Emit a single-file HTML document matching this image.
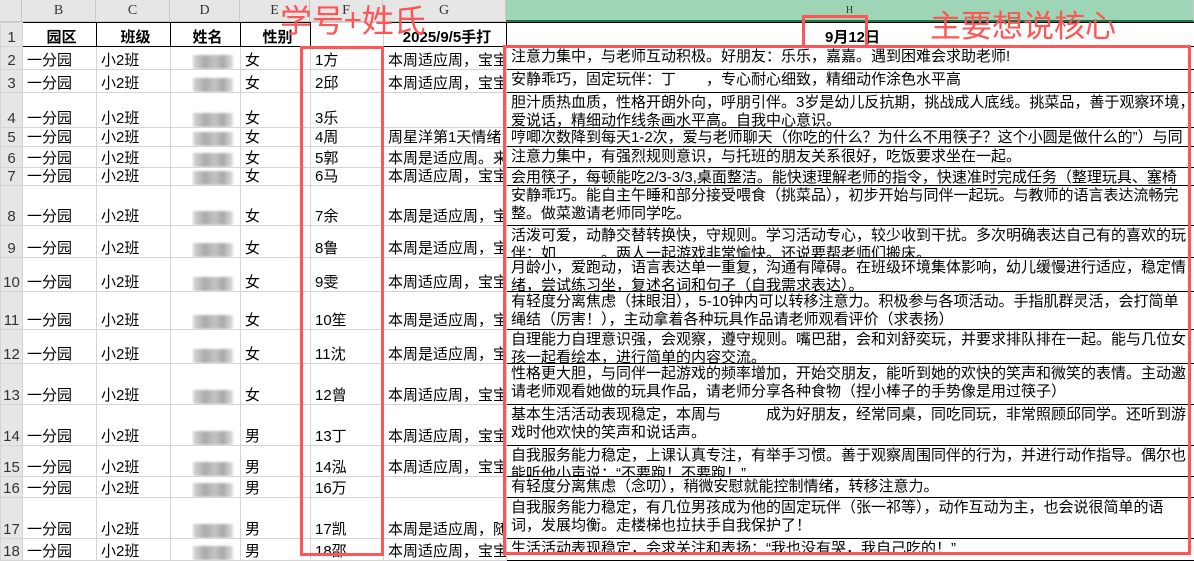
<!DOCTYPE html>
<html><head><meta charset="utf-8"><style>
*{margin:0;padding:0;box-sizing:border-box}
body{width:1194px;height:545px;overflow:hidden;background:#fff;font-family:"Liberation Sans","Noto Sans CJK SC",sans-serif;position:relative}
.hdr{position:absolute;top:0;height:22px;background:#e6e6e6;border-right:1px solid #c8c8c8;border-bottom:1px solid #c8c8c8;font-family:"Liberation Serif",serif;font-size:14px;color:#333;text-align:center;line-height:22px}
table{position:absolute;left:0;top:22px;border-collapse:collapse;table-layout:fixed;width:1194px}
td{border:1px solid #d4d4d4;white-space:nowrap;overflow:hidden;vertical-align:bottom;font-size:15px;line-height:16px;padding:0 0 0 4px;color:#000}
td.n{background:#e6e6e6;color:#333;padding:0;text-align:center;font-size:15px}
td.h{border:1px solid #000;position:relative;padding:0}
td.h div{position:absolute;left:4px;top:1px;line-height:18px}
td.b{font-weight:bold;text-align:center;border:1px solid #000}
.blur{display:inline-block;width:40px;height:14px;background:linear-gradient(90deg,#d8d8d8,#aaa 30%,#c4c4c4 55%,#a8a8a8 75%,#e0e0e0);filter:blur(1px);vertical-align:bottom;margin-left:18px}
.rb{position:absolute;border:3px solid #f55}
.ann{position:absolute;color:#f55;font-family:"Noto Sans CJK SC",sans-serif;white-space:nowrap}
</style></head><body>
<div class="hdr" style="left:0;width:22px"></div>
<div class="hdr" style="left:22px;width:74px">B</div>
<div class="hdr" style="left:96px;width:74px">C</div>
<div class="hdr" style="left:170px;width:70px">D</div>
<div class="hdr" style="left:240px;width:70px">E</div>
<div class="hdr" style="left:310px;width:73px">F</div>
<div class="hdr" style="left:383px;width:123px">G</div>
<div class="hdr" style="left:506px;width:688px;background:#9fd5b7;border-bottom:2px solid #217346;font-size:10px">H</div>
<table>
<colgroup><col style="width:22px"><col style="width:74px"><col style="width:74px"><col style="width:70px"><col style="width:70px"><col style="width:73px"><col style="width:123px"><col style="width:688px"></colgroup>
<tr style="height:24px"><td class="n">1</td><td class="b">园区</td><td class="b">班级</td><td class="b">姓名</td><td class="b">性别</td><td></td><td class="b">2025/9/5手打</td><td class="b">9月12日</td></tr>
<tr style="height:23px"><td class="n">2</td><td>一分园</td><td>小2班</td><td><span class="blur"></span></td><td>女</td><td>1方</td><td>本周适应周，宝宝</td><td class="h"><div>注意力集中，与老师互动积极。好朋友：乐乐，嘉嘉。遇到困难会求助老师!</div></td></tr>
<tr style="height:23px"><td class="n">3</td><td>一分园</td><td>小2班</td><td><span class="blur"></span></td><td>女</td><td>2邱</td><td>本周适应周，宝宝</td><td class="h"><div>安静乖巧，固定玩伴：丁　　，专心耐心细致，精细动作涂色水平高</div></td></tr>
<tr style="height:35px"><td class="n">4</td><td>一分园</td><td>小2班</td><td><span class="blur"></span></td><td>女</td><td>3乐</td><td></td><td class="h"><div>胆汁质热血质，性格开朗外向，呼朋引伴。3岁是幼儿反抗期，挑战成人底线。挑菜品，善于观察环境，<br>爱说话，精细动作线条画水平高。自我中心意识。</div></td></tr>
<tr style="height:19px"><td class="n">5</td><td>一分园</td><td>小2班</td><td><span class="blur"></span></td><td>女</td><td>4周</td><td>周星洋第1天情绪</td><td class="h"><div>哼唧次数降到每天1-2次，爱与老师聊天（你吃的什么？为什么不用筷子？这个小圆是做什么的”）与同</div></td></tr>
<tr style="height:21px"><td class="n">6</td><td>一分园</td><td>小2班</td><td><span class="blur"></span></td><td>女</td><td>5郭</td><td>本周是适应周。来</td><td class="h"><div>注意力集中，有强烈规则意识，与托班的朋友关系很好，吃饭要求坐在一起。</div></td></tr>
<tr style="height:18px"><td class="n">7</td><td>一分园</td><td>小2班</td><td><span class="blur"></span></td><td>女</td><td>6马</td><td>本周适应周，宝宝</td><td class="h"><div>会用筷子，每顿能吃2/3-3/3,桌面整洁。能快速理解老师的指令，快速准时完成任务（整理玩具、塞椅</div></td></tr>
<tr style="height:40px"><td class="n">8</td><td>一分园</td><td>小2班</td><td><span class="blur"></span></td><td>女</td><td>7余</td><td>本周是适应周，宝宝</td><td class="h"><div>安静乖巧。能自主午睡和部分接受喂食（挑菜品），初步开始与同伴一起玩。与教师的语言表达流畅完<br>整。做菜邀请老师同学吃。</div></td></tr>
<tr style="height:32px"><td class="n">9</td><td>一分园</td><td>小2班</td><td><span class="blur"></span></td><td>女</td><td>8鲁</td><td>本周是适应周，宝宝</td><td class="h"><div>活泼可爱，动静交替转换快，守规则。学习活动专心，较少收到干扰。多次明确表达自己有的喜欢的玩<br>伴：如　　　。两人一起游戏非常愉快。还说要帮老师们搬床。</div></td></tr>
<tr style="height:34px"><td class="n">10</td><td>一分园</td><td>小2班</td><td><span class="blur"></span></td><td>女</td><td>9雯</td><td>本周适应周，宝宝</td><td class="h"><div>月龄小，爱跑动，语言表达单一重复，沟通有障碍。在班级环境集体影响，幼儿缓慢进行适应，稳定情<br>绪，尝试练习坐，复述名词和句子（自我需求表达）。</div></td></tr>
<tr style="height:38px"><td class="n">11</td><td>一分园</td><td>小2班</td><td><span class="blur"></span></td><td>女</td><td>10笙</td><td>本周是适应周，宝宝</td><td class="h"><div>有轻度分离焦虑（抹眼泪），5-10钟内可以转移注意力。积极参与各项活动。手指肌群灵活，会打简单<br>绳结（厉害！），主动拿着各种玩具作品请老师观看评价（求表扬）</div></td></tr>
<tr style="height:34px"><td class="n">12</td><td>一分园</td><td>小2班</td><td><span class="blur"></span></td><td>女</td><td>11沈</td><td>本周是适应周，宝宝</td><td class="h"><div>自理能力自理意识强，会观察，遵守规则。嘴巴甜，会和刘舒奕玩，并要求排队排在一起。能与几位女<br>孩一起看绘本，进行简单的内容交流。</div></td></tr>
<tr style="height:41px"><td class="n">13</td><td>一分园</td><td>小2班</td><td><span class="blur"></span></td><td>女</td><td>12曾</td><td>本周适应周，宝宝</td><td class="h"><div>性格更大胆，与同伴一起游戏的频率增加，开始交朋友，能听到她的欢快的笑声和微笑的表情。主动邀<br>请老师观看她做的玩具作品，请老师分享各种食物（捏小棒子的手势像是用过筷子）</div></td></tr>
<tr style="height:41px"><td class="n">14</td><td>一分园</td><td>小2班</td><td><span class="blur"></span></td><td>男</td><td>13丁</td><td>本周适应周，宝宝</td><td class="h"><div>基本生活活动表现稳定，本周与　　　成为好朋友，经常同桌，同吃同玩，非常照顾邱同学。还听到游<br>戏时他欢快的笑声和说话声。</div></td></tr>
<tr style="height:31px"><td class="n">15</td><td>一分园</td><td>小2班</td><td><span class="blur"></span></td><td>男</td><td>14泓</td><td>本周适应周，宝宝</td><td class="h"><div>自我服务能力稳定，上课认真专注，有举手习惯。善于观察周围同伴的行为，并进行动作指导。偶尔也<br>能听他小声说：“不要跑！不要跑！”</div></td></tr>
<tr style="height:21px"><td class="n">16</td><td>一分园</td><td>小2班</td><td><span class="blur"></span></td><td>男</td><td>16万</td><td></td><td class="h"><div>有轻度分离焦虑（念叨），稍微安慰就能控制情绪，转移注意力。</div></td></tr>
<tr style="height:41px"><td class="n">17</td><td>一分园</td><td>小2班</td><td><span class="blur"></span></td><td>男</td><td>17凯</td><td>本周是适应周，随</td><td class="h"><div>自我服务能力稳定，有几位男孩成为他的固定玩伴（张一祁等），动作互动为主，也会说很简单的语<br>词，发展均衡。走楼梯也拉扶手自我保护了！</div></td></tr>
<tr style="height:22px"><td class="n">18</td><td>一分园</td><td>小2班</td><td><span class="blur"></span></td><td>男</td><td>18邵</td><td>本周适应周，宝宝</td><td class="h"><div>生活活动表现稳定，会求关注和表扬：“我也没有哭，我自己吃的！”</div></td></tr>
</table>
<div class="rb" style="left:300px;top:46px;width:84px;height:510px"></div>
<div class="rb" style="left:503px;top:45px;width:688px;height:510px"></div>
<div class="rb" style="left:802px;top:15px;width:66px;height:33px"></div>
<div class="ann" style="left:280px;top:-4px;font-size:32px">学号+姓氏</div>
<div class="ann" style="left:930px;top:1px;font-size:31px">主要想说核心</div>
</body></html>
